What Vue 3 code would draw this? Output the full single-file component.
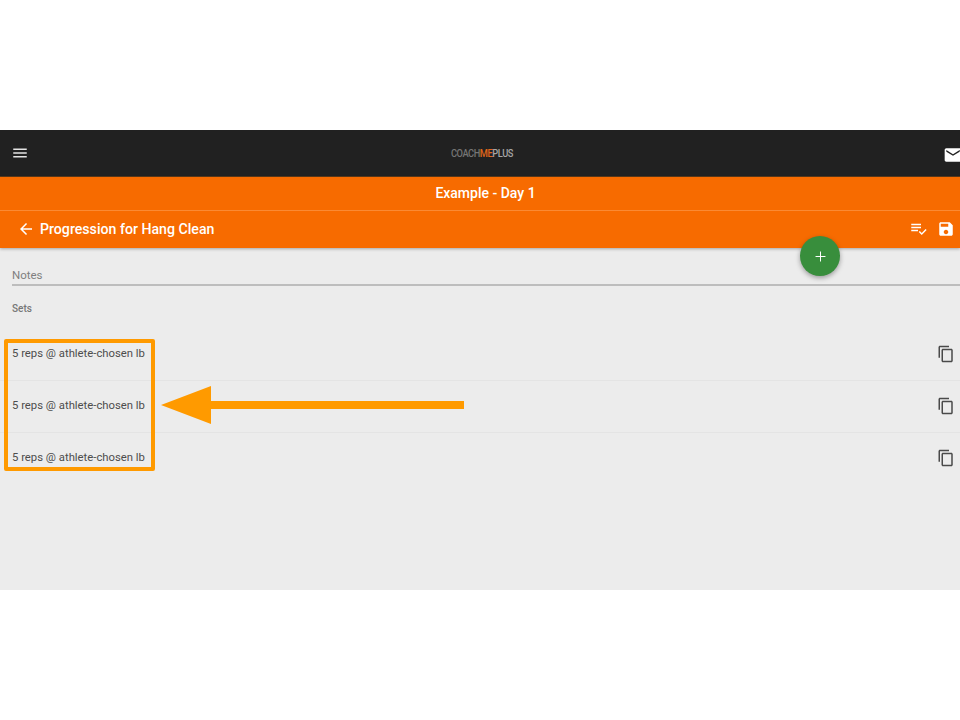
<script setup>
const sets = ['5 reps @ athlete-chosen lb', '5 reps @ athlete-chosen lb', '5 reps @ athlete-chosen lb']
</script>

<template>
  <div class="page">
    <div class="screen">
      <header class="topbar">
        <svg class="menu" viewBox="0 0 24 24" width="18" height="18"><path d="M3 18h18v-2H3v2zm0-5h18v-2H3v2zm0-7v2h18V6H3z" fill="#e4e4e4"/></svg>
        <div class="logo"><span class="grey">COACH</span><span class="orange">ME</span><span class="light">PLUS</span></div>
        <svg class="mail" viewBox="0 0 24 24" width="20" height="20"><path d="M20 4H4c-1.100 0-2 .9-2 2v12c0 1.100.9 2 2 2h16c1.100 0 2-.9 2-2V6c0-1.100-.9-2-2-2zm0 4l-8 5-8-5V6l8 5 8-5v2z" fill="#fff"/></svg>
      </header>
      <div class="band">
        <div class="day">Example - Day 1</div>
        <div class="title-row">
          <svg class="back" viewBox="0 0 24 24" width="18" height="18"><path d="M20 11H7.830l5.590-5.590L12 4l-8 8 8 8 1.410-1.410L7.830 13H20v-2z" fill="#fff"/></svg>
          <span class="title">Progression for Hang Clean</span>
          <span class="spacer"></span>
          <svg class="check" viewBox="0 0 24 24" width="18" height="18"><path d="M3 5h13v2H3zM3 9h13v2H3zM3 13h9v2H3zM13 16l1.400-1.400 2.600 2.600 5.100-5.200 1.400 1.400-6.500 6.600z" fill="#fff"/></svg>
          <svg class="save" viewBox="0 0 24 24" width="18" height="18"><path d="M17 3H5c-1.110 0-2 .9-2 2v14c0 1.100.89 2 2 2h14c1.100 0 2-.9 2-2V7l-4-4zm-5 16c-1.660 0-3-1.340-3-3s1.340-3 3-3 3 1.340 3 3-1.340 3-3 3zm3-10H5V5h10v4z" fill="#fff"/></svg>
        </div>
      </div>
      <main class="content">
        <div class="notes">Notes</div>
        <div class="sets-label">Sets</div>
        <ul class="sets">
          <li v-for="(s, i) in sets" :key="i" class="set">
            <span>{{ s }}</span>
            <svg viewBox="0 0 24 24" width="18" height="18"><path d="M16 1H4c-1.100 0-2 .9-2 2v14h2V3h12V1zm3 4H8c-1.100 0-2 .9-2 2v14c0 1.100.9 2 2 2h11c1.100 0 2-.9 2-2V7c0-1.100-.9-2-2-2zm0 16H8V7h11v14z" fill="#4a4a4a"/></svg>
          </li>
        </ul>
      </main>
      <button class="fab" aria-label="Add">
        <svg viewBox="0 0 24 24" width="17" height="17"><path d="M19 12.700h-6.300V19h-1.400v-6.300H5v-1.400h6.300V5h1.400v6.300H19v1.400z" fill="#fff"/></svg>
      </button>
      <div class="highlight"></div>
      <svg class="arrow" width="310" height="44" viewBox="0 0 310 44"><path d="M1 22 L51 3 V18 H304 V26 H51 V41 Z" fill="#ff9a00"/></svg>
    </div>
  </div>
</template>

<style scoped>
.page {
  width: 960px;
  height: 720px;
  padding-top: 130px;
  box-sizing: border-box;
  background: #fff;
  overflow: hidden;
  font-family: Roboto, "Liberation Sans", sans-serif;
}
.screen {
  position: relative;
  height: 460px;
  background: #ececec;
  overflow: hidden;
}
.topbar {
  height: 46px;
  background: #212121;
  display: flex;
  align-items: center;
  position: relative;
  border-bottom: 1px solid #5a3a1c;
}
.menu {
  margin-left: 11px;
  margin-top: -1px;
}
.logo {
  position: absolute;
  left: 451px;
  top: 18px;
  font-size: 10px;
  line-height: 12px;
  font-weight: 500;
  letter-spacing: -0.5px;
  transform: scaleX(0.93);
  transform-origin: left center;
}
.grey { color: #757575; }
.orange { color: #e0671a; }
.light { color: #a6a6a6; }
.mail {
  position: absolute;
  left: 943px;
  top: 15px;
}
.band {
  background: #f76b00;
  height: 71px;
  box-shadow: 0 1px 3px rgba(0, 0, 0, 0.3);
  position: relative;
}
.day {
  height: 33px;
  line-height: 33px;
  padding-left: 11px;
  text-align: center;
  font-size: 14px;
  font-weight: 500;
  color: #fff;
  border-bottom: 1px solid #fb8a33;
}
.title-row {
  height: 35px;
  padding: 0 5px 2px 17px;
  display: flex;
  align-items: center;
  color: #fff;
}
.title {
  margin-left: 5px;
  font-size: 14.15px;
  font-weight: 500;
}
.spacer { flex: 1; }
.check { margin-right: 10px; }
.content {
  padding: 0;
}
.notes {
  margin: 17px 0 0 12px;
  height: 19px;
  line-height: 20px;
  font-size: 11.5px;
  color: #7f7f7f;
  border-bottom: 2px solid #bdbdbd;
}
.sets-label {
  margin: 16px 0 0 12px;
  font-size: 10px;
  line-height: 14px;
  font-weight: 500;
  color: #777;
}
.sets {
  list-style: none;
  margin: 13px 0 0;
  padding: 0;
}
.set {
  height: 49px;
  padding: 0 5px 2px 12px;
  border-bottom: 1px solid #e4e4e4;
  display: flex;
  align-items: center;
  justify-content: space-between;
  font-size: 11.3px;
  color: #4d4d4d;
}
.set:last-child { border-bottom: none; }
.fab {
  position: absolute;
  left: 800px;
  top: 106px;
  width: 40px;
  height: 40px;
  border: none;
  padding: 0;
  border-radius: 50%;
  background: #388e3c;
  box-shadow: 0 2px 5px rgba(0, 0, 0, 0.35);
  display: flex;
  align-items: center;
  justify-content: center;
}
.highlight {
  position: absolute;
  left: 4px;
  top: 209px;
  width: 151px;
  height: 132px;
  box-sizing: border-box;
  border: 4px solid #ff9a00;
  border-radius: 2px;
}
.arrow {
  position: absolute;
  left: 160px;
  top: 253px;
}
</style>
